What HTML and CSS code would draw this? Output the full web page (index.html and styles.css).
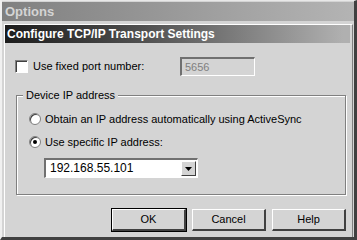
FILE: index.html
```html
<!DOCTYPE html>
<html>
<head>
<meta charset="utf-8">
<title>Options</title>
<link rel="stylesheet" href="styles.css">
</head>
<body>
<div class="win">
  <div class="caption">Options</div>
  <div class="client">
    <div class="banner">Configure TCP/IP Transport Settings</div>
    <div class="portrow">
      <label class="chk"><span class="box"></span>Use fixed port number:</label>
      <div class="edit disabled">5656</div>
    </div>
    <div class="group">
      <div class="legend">Device IP address</div>
      <div class="radio"><span class="dot"></span>Obtain an IP address automatically using ActiveSync</div>
      <div class="radio"><span class="dot on"></span>Use specific IP address:</div>
      <div class="combo">
        <span class="val">192.168.55.101</span>
        <span class="drop"><svg width="7" height="4" viewBox="0 0 7 4"><path d="M0 0h7L3.5 4z" fill="#000"/></svg></span>
      </div>
    </div>
    <div class="buttons">
      <div class="btn def">OK</div>
      <div class="btn">Cancel</div>
      <div class="btn">Help</div>
    </div>
  </div>
</div>
</body>
</html>
```

FILE: styles.css
```css
html, body { margin:0; padding:0; background:#d4d4d4; }
body { font-family:Tahoma, "Liberation Sans", sans-serif; font-size:11px; color:#000; }
.win { width:357px; height:240px; box-sizing:border-box; border-top:1px solid #e8e8e8; border-left:2px solid #f0f0f0; border-right:3px solid #404040; border-bottom:3px solid #404040; background:#d4d4d4; display:flex; flex-direction:column; }
.caption { height:19px; margin-top:1px; background:linear-gradient(to right, #808080, #b4b4b4); color:#d4d4d4; font-weight:bold; font-size:13px; line-height:19px; padding-left:3px; }
.client { flex:1; margin:3px 1px 0 2px; border-top:1px solid #fff; border-left:1px solid #fff; border-right:1px solid #808080; display:flex; flex-direction:column; }
.banner { height:18px; margin:0 2px 0 0; background:linear-gradient(to right, #1c1c1c, #505050 40%, #b0b0b0 98%); color:#fff; font-weight:bold; font-size:12px; line-height:18px; padding-left:2px; }
.portrow { display:flex; align-items:center; height:20px; margin-top:13px; padding-left:10px; }
.chk { display:flex; align-items:center; width:165px; }
.box { width:11px; height:11px; background:#fff; border-top:1px solid #808080; border-left:1px solid #808080; border-right:1px solid #fff; border-bottom:1px solid #fff; box-shadow:inset 1px 1px 0 #404040; margin-right:5px; }
.edit { width:69px; height:16px; line-height:16px; padding-left:3px; border-top:2px solid #707070; border-left:2px solid #707070; border-right:1px solid #fff; border-bottom:1px solid #fff; }
.disabled { color:#808080; background:#d4d4d4; }
.group { margin:19px 6px 0 11px; height:100px; border:1px solid #808080; box-shadow:1px 1px 0 #fff, inset 1px 1px 0 #fff; position:relative; padding:16px 0 0 12px; box-sizing:border-box; }
.legend { position:absolute; top:-7px; left:6px; padding:0 3px; background:#d4d4d4; line-height:13px; }
.radio { display:flex; align-items:center; height:13px; margin-bottom:10px; }
.dot { width:10px; height:10px; border-radius:50%; background:#fff; border:1px solid #808080; box-shadow:inset 1px 1px 0 #404040; margin-right:4px; position:relative; }
.dot.on::after { content:""; position:absolute; left:3px; top:3px; width:4px; height:4px; border-radius:50%; background:#000; }
.combo { display:flex; width:154px; height:20px; box-sizing:border-box; margin-left:15px; border-top:2px solid #707070; border-left:2px solid #707070; border-right:1px solid #fff; border-bottom:1px solid #fff; background:#fff; }
.val { flex:1; padding-left:4px; line-height:17px; font-size:12px; }
.drop { width:13px; background:#d4d4d4; border:1px solid #fff; border-right-color:#404040; border-bottom-color:#404040; display:flex; align-items:center; justify-content:center; margin:1px; }
.buttons { display:flex; justify-content:flex-end; gap:6px; margin:14px 6px 0 0; }
.btn { width:74px; height:22px; box-sizing:border-box; text-align:center; line-height:19px; border-top:1px solid #fff; border-left:1px solid #fff; border-right:2px solid #404040; border-bottom:2px solid #404040; }
.btn.def { outline:1px solid #000; }
```
